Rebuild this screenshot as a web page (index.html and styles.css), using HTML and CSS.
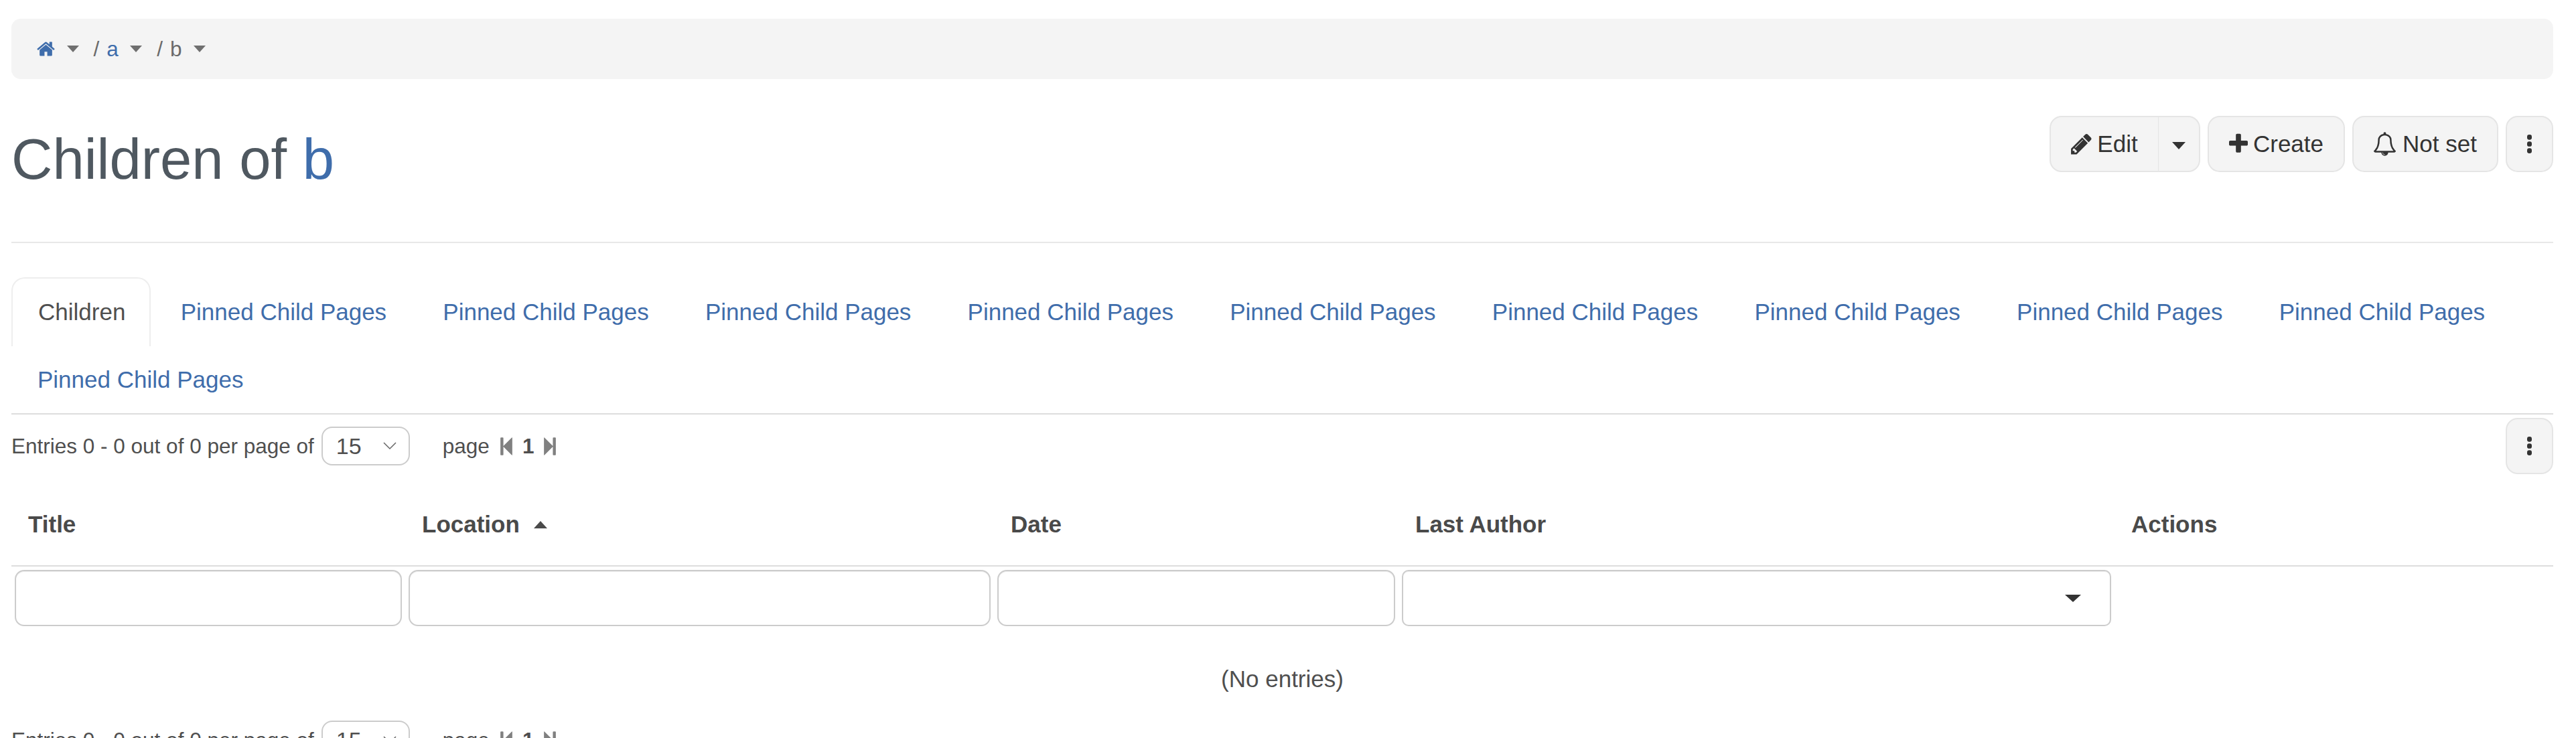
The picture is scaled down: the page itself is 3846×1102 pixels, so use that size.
FILE: index.html
```html
<!DOCTYPE html>
<html lang="en">
<head>
<meta charset="utf-8">
<title>Children of b</title>
<link rel="stylesheet" href="styles.css">
</head>
<body>
<svg class="defs" width="0" height="0">
  <symbol id="i-home" viewBox="0 0 1664 1792"><path d="M1408 992v480q0 26-19 45t-45 19h-384v-384h-256v384h-384q-26 0-45-19t-19-45v-480q0-1 .5-3t.5-3l575-474 575 474q1 2 1 6zm223-69l-62 74q-8 9-21 11h-3q-13 0-21-7l-692-577-692 577q-12 8-24 7-13-2-21-11l-62-74q-8-10-7-23.500t11-21.500l719-599q32-26 76-26t76 26l244 204v-195q0-14 9-23t23-9h192q14 0 23 9t9 23v408l219 182q10 8 11 21.500t-7 23.500z"/></symbol>
  <symbol id="i-pencil" viewBox="0 0 1536 1792"><path d="M363 1536l91-91-235-235-91 91v107h128v128h107zm523-928q0-22-22-22-10 0-17 7l-542 542q-7 7-7 17 0 22 22 22 10 0 17-7l542-542q7-7 7-17zm-54-192l416 416-832 832h-416v-416zm683 96q0 53-37 90l-166 166-416-416 166-165q36-38 90-38 53 0 91 38l235 234q37 39 37 91z"/></symbol>
  <symbol id="i-plus" viewBox="0 0 1408 1792"><path d="M1408 736v192q0 40-28 68t-68 28h-416v416q0 40-28 68t-68 28h-192q-40 0-68-28t-28-68v-416h-416q-40 0-68-28t-28-68v-192q0-40 28-68t68-28h416v-416q0-40 28-68t68-28h192q40 0 68 28t28 68v416h416q40 0 68 28t28 68z"/></symbol>
  <symbol id="i-bell" viewBox="0 0 1664 1792"><path d="M848 1696q0-16-16-16-59 0-101.500-42.500t-42.500-101.500q0-16-16-16t-16 16q0 73 51.500 124.500t124.500 51.500q16 0 16-16zm-666-288h1300q-266-300-266-832 0-51-24-105t-69-103-121.500-80.500-169.500-31.500-169.500 31.500-121.500 80.500-69 103-24 105q0 532-266 832zm1482 0q0 52-38 90t-90 38h-448q0 106-75 181t-181 75-181-75-75-181h-448q-52 0-90-38t-38-90q50-42 91-88t85-119.500 74.500-158.500 50-206 19.500-260q0-152 117-282.500t307-158.500q-8-19-8-39 0-40 28-68t68-28 68 28 28 68q0 20-8 39 190 28 307 158.500t117 282.500q0 139 19.500 260t50 206 74.500 158.500 85 119.500 91 88z"/></symbol>
  <symbol id="i-dots" viewBox="0 0 12 40"><rect x="1" y="0" width="10" height="11" rx="4.500"/><rect x="1" y="14.500" width="10" height="11" rx="4.500"/><rect x="1" y="29" width="10" height="11" rx="4.500"/></symbol>
  <symbol id="i-first" viewBox="0 0 1024 1792"><path d="M979 141q19-19 32-13t13 32v1472q0 26-13 32t-32-13l-710-710q-9-9-13-19v678q0 26-19 45t-45 19h-128q-26 0-45-19t-19-45v-1408q0-26 19-45t45-19h128q26 0 45 19t19 45v678q4-10 13-19z"/></symbol>
  <symbol id="i-last" viewBox="0 0 1024 1792"><path d="M45 1651q-19 19-32 13t-13-32v-1472q0-26 13-32t32 13l710 710q9 9 13 19v-678q0-26 19-45t45-19h128q26 0 45 19t19 45v1408q0 26-19 45t-45 19h-128q-26 0-45-19t-19-45v-678q-4 10-13 19z"/></symbol>
</svg>
<div class="page">
  <nav class="crumbs">
    <a class="crumb link" href="#"><svg class="ico-home"><use href="#i-home"/></svg></a><span class="caret caret-crumb"></span>
    <span class="sep">/</span><a class="crumb link" href="#">a</a><span class="caret caret-crumb"></span>
    <span class="sep">/</span><span class="crumb">b</span><span class="caret caret-crumb"></span>
  </nav>

  <header class="head">
    <h1 class="title">Children of <a class="link" href="#">b</a></h1>
    <div class="tools">
      <div class="btn-group">
        <button class="btn btn-main"><svg class="ico ico-pencil"><use href="#i-pencil"/></svg>Edit</button>
        <button class="btn btn-split"><span class="caret caret-btn"></span></button>
      </div>
      <button class="btn btn-create"><svg class="ico ico-plus"><use href="#i-plus"/></svg>Create</button>
      <button class="btn btn-watch"><svg class="ico ico-bell"><use href="#i-bell"/></svg>Not set</button>
      <button class="btn btn-kebab"><svg class="ico-dots"><use href="#i-dots"/></svg></button>
    </div>
  </header>

  <ul class="tabs">
    <li class="tab active">Children</li>
    <li class="tab"><a href="#">Pinned Child Pages</a></li>
    <li class="tab"><a href="#">Pinned Child Pages</a></li>
    <li class="tab"><a href="#">Pinned Child Pages</a></li>
    <li class="tab"><a href="#">Pinned Child Pages</a></li>
    <li class="tab"><a href="#">Pinned Child Pages</a></li>
    <li class="tab"><a href="#">Pinned Child Pages</a></li>
    <li class="tab"><a href="#">Pinned Child Pages</a></li>
    <li class="tab"><a href="#">Pinned Child Pages</a></li>
    <li class="tab"><a href="#">Pinned Child Pages</a></li>
    <li class="tab"><a href="#">Pinned Child Pages</a></li>
  </ul>

  <div class="pager">
    <span>Entries 0 - 0 out of 0 per page of</span>
    <span class="select">15<svg class="chev" viewBox="0 0 20 12"><path d="M1 1l9 9 9-9"/></svg></span>
    <span class="page-word">page</span>
    <svg class="step"><use href="#i-first"/></svg>
    <b class="page-num">1</b>
    <svg class="step"><use href="#i-last"/></svg>
    <button class="btn btn-kebab btn-end"><svg class="ico-dots"><use href="#i-dots"/></svg></button>
  </div>

  <table class="grid">
    <thead>
      <tr class="row-head">
        <th class="col-title">Title</th>
        <th class="col-location">Location<span class="sort-up"></span></th>
        <th class="col-date">Date</th>
        <th class="col-author">Last Author</th>
        <th>Actions</th>
      </tr>
    </thead>
    <tbody>
      <tr class="row-filter">
        <td><div class="field"></div></td>
        <td><div class="field"></div></td>
        <td><div class="field"></div></td>
        <td><div class="field field-select"><span class="caret caret-field"></span></div></td>
        <td></td>
      </tr>
      <tr><td class="empty" colspan="5">(No entries)</td></tr>
    </tbody>
  </table>

  <div class="pager pager-bottom">
    <span>Entries 0 - 0 out of 0 per page of</span>
    <span class="select">15<svg class="chev" viewBox="0 0 20 12"><path d="M1 1l9 9 9-9"/></svg></span>
    <span class="page-word">page</span>
    <svg class="step"><use href="#i-first"/></svg>
    <b class="page-num">1</b>
    <svg class="step"><use href="#i-last"/></svg>
  </div>
</div>
</body>
</html>
```
FILE: styles.css
```css
* { box-sizing: border-box; }
html, body { margin: 0; height: 1102px; overflow: hidden; background: #fff; }
body { font-family: "Liberation Sans", Arial, sans-serif; font-size: 31.500px; color: #4f4f4f; }
a { color: inherit; text-decoration: none; }
.defs { position: absolute; }
.page { padding: 28px 34px 0 17px; }
.link { color: #3f6dab; }

.crumbs { display: flex; align-items: center; height: 90px; padding-left: 38px; background: #f4f4f4; border-radius: 14px; font-size: 31.500px; color: #6a6a6a; }
.crumb { display: flex; align-items: center; }
.ico-home { width: 27px; height: 30px; fill: #3f6dab; }
.caret { display: inline-block; width: 0; height: 0; border-style: solid; border-color: #6f6f6f transparent transparent; }
.caret-crumb { border-width: 10px 9px 0; margin: 0 22px 0 17.500px; }
.sep { margin-right: 11px; }

.head { display: flex; justify-content: space-between; height: 245px; border-bottom: 2px solid #e8e8e8; }
.title { margin: 71px 0 0; font-size: 85px; font-weight: 400; line-height: 98px; color: #4f5860; }
.tools { display: flex; gap: 11px; margin-top: 55px; align-items: flex-start; }
.btn { display: inline-flex; align-items: center; justify-content: center; height: 84px; padding: 0; background: #f4f4f4; border: 2px solid #e5e5e5; border-radius: 18px; color: #333; font: 35px "Liberation Sans", Arial, sans-serif; }
.btn-group { display: flex; }
.btn-main { border-radius: 18px 0 0 18px; border-right-width: 1px; width: 163px; }
.btn-split { border-radius: 0 18px 18px 0; border-left: 0; width: 62px; }
.btn-create { width: 205px; }
.btn-watch { width: 218px; }
.btn-kebab { width: 71px; }
.caret-btn { border-width: 11px 10px 0; border-top-color: #333; margin-top: 5px; }
.ico { fill: #333; margin-right: 8px; }
.ico-pencil { width: 31px; height: 36px; }
.ico-plus { width: 28px; height: 36px; }
.ico-bell { width: 33px; height: 36px; margin-right: 10px; }
.ico-dots { width: 9px; height: 28px; fill: #333; }

.tabs { display: flex; flex-wrap: wrap; align-content: flex-start; list-style: none; margin: 51px 0 0; padding: 0; height: 205px; border-bottom: 2px solid #ddd; font-size: 35px; }
.tab { height: 101px; margin-right: 5.700px; padding: 32px 39.500px 0 39px; color: #3f6dab; line-height: 40px; }
.tab.active { width: 208px; height: 103px; margin-bottom: -2px; padding: 30px 0 0 38px; color: #4f4f4f; border: 2px solid #eee; border-bottom: 0; border-radius: 20px 20px 0 0; }

.pager { display: flex; align-items: center; height: 94px; }
.select { display: flex; align-items: center; justify-content: space-between; width: 132px; height: 58px; margin-left: 11px; padding: 0 18px 0 20px; border: 2px solid #ccc; border-radius: 16px; font-size: 34px; }
.chev { width: 20px; height: 12px; fill: none; stroke: #666; stroke-width: 1.500; }
.page-word { margin-left: 49px; margin-right: 16px; }
.step { width: 18px; height: 31px; fill: #808080; }
.page-num { margin: 0 15px; }
.btn-end { margin-left: auto; }

.grid { width: 100%; border-collapse: collapse; table-layout: fixed; }
.row-head th { height: 132px; padding: 8px 0 0 25px; text-align: left; font-size: 35px; color: #4a4a4a; border-bottom: 2px solid #ddd; }
.col-title { width: 588px; }
.col-location { width: 879px; }
.col-date { width: 604px; }
.col-author { width: 1069px; }
.sort-up { display: inline-block; width: 0; height: 0; margin: 0 0 6px 21px; border-style: solid; border-width: 0 10px 11px; border-color: transparent transparent #4a4a4a; }
.row-filter td { height: 94px; padding: 5px; }
.field { height: 84px; border: 2px solid #ccc; border-radius: 14px; background: #fff; box-shadow: inset 0 1px 1px rgba(0, 0, 0, .075); }
.field-select { display: flex; align-items: center; justify-content: flex-end; padding-right: 43px; border-radius: 10px; }
.caret-field { border-width: 11px 12px 0; border-top-color: #333; }
.empty { height: 136px; padding: 12px 0 0; text-align: center; font-size: 35px; }
.pager-bottom { height: 58px; }
```
